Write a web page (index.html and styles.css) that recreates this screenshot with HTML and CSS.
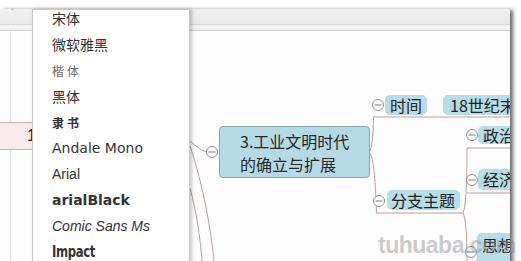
FILE: index.html
```html
<!DOCTYPE html>
<html lang="zh-CN">
<head>
<meta charset="utf-8">
<title>Mind map font menu</title>
<link rel="stylesheet" href="styles.css">
</head>
<body>
<div class="stage">
  <div class="window">
    <div class="titlebar"><span class="caret">ˇ</span></div>
    <div class="canvas">
      <div class="guide"></div>
      <svg class="links" width="510" height="230" viewBox="0 31 510 230" xmlns="http://www.w3.org/2000/svg">
        <g fill="none" stroke="#c39b9b" stroke-width="1">
          <path d="M190 146 C200 175 210 220 214 261"/>
          <path d="M190 188 C196 210 200 235 202 261"/>
          <path d="M190 141 Q200 150 206.5 152"/>
          <path d="M370 151 Q373 146 373.5 117 H510"/>
          <path d="M370 153 Q375 160 376.5 213 H463"/>
          <path d="M463 213 Q467 206 467 148 H510"/>
          <path d="M463 213 Q467 220 467 261"/>
          <path d="M467 193 H510"/>
        </g>
        <g fill="#fff" stroke="#8e8e8e" stroke-width="1">
          <circle cx="212" cy="152" r="5.5"/>
          <circle cx="378" cy="105" r="5.5"/>
          <circle cx="472" cy="135" r="5.5"/>
          <circle cx="472" cy="180" r="5.5"/>
          <circle cx="379" cy="201" r="5.5"/>
          <circle cx="471" cy="252" r="5.5"/>
        </g>
        <g stroke="#7a7a7a" stroke-width="1">
          <path d="M208.5 152 H215.5"/>
          <path d="M374.5 105 H381.5"/>
          <path d="M468.5 135 H475.5"/>
          <path d="M468.5 180 H475.5"/>
          <path d="M375.5 201 H382.5"/>
          <path d="M467.5 252 H474.5"/>
        </g>
      </svg>
      <div class="root">1</div>
      <div class="main-topic">3.工业文明时代<br>的确立与扩展</div>
      <div class="topic t-time">时间</div>
      <div class="topic t-era">18世纪末</div>
      <div class="topic t-pol">政治</div>
      <div class="topic t-eco">经济</div>
      <div class="topic t-branch">分支主题</div>
      <div class="topic t-idea">思想<br>文化</div>
    </div>
  </div>

  <div class="font-menu">
    <ul class="font-list">
      <li class="f-song">宋体</li>
      <li class="f-yahei">微软雅黑</li>
      <li class="f-kai">楷体</li>
      <li class="f-hei">黑体</li>
      <li class="f-li">隶书</li>
      <li class="f-andale">Andale Mono</li>
      <li class="f-arial">Arial</li>
      <li class="f-black">arialBlack</li>
      <li class="f-comic">Comic Sans Ms</li>
      <li class="f-impact">Impact</li>
    </ul>
  </div>

  <div class="watermark">tuhuaba.com</div>
</div>
</body>
</html>
```

FILE: styles.css
```css
* { box-sizing: border-box; }

html, body {
  margin: 0;
  padding: 0;
  background: #ffffff;
}

.stage {
  position: relative;
  width: 521px;
  height: 261px;
  overflow: hidden;
  background: #ffffff;
  font-family: "Noto Sans CJK SC", "Liberation Sans", sans-serif;
}

.window {
  margin-top: 9px;
  width: 510px;
  height: 260px;
  background: #fdfdfd;
  box-shadow: 3px 1px 4px 0 rgba(0, 0, 0, 0.6);
  display: flex;
  flex-direction: column;
}

.titlebar {
  position: relative;
  height: 22px;
  flex: none;
  background: linear-gradient(to bottom, #efefef 0, #e9e9e9 15px, #d8d8d8 15px, #d8d8d8 16px, #f3f3f3 16px, #f1f1f1 21px);
  border-bottom: 1px solid #cccccc;
}

.caret {
  position: absolute;
  left: 10px;
  top: -2px;
  font: 9px/12px "DejaVu Sans", sans-serif;
  color: #9a9a9a;
}

.canvas {
  position: relative;
  flex: 1;
  overflow: hidden;
}

.guide {
  position: absolute;
  left: 10px;
  top: 0;
  width: 1px;
  height: 100%;
  background: #e8e8e8;
}

.links {
  position: absolute;
  left: 0;
  top: 0;
}

.root {
  position: absolute;
  left: -20px;
  top: 91px;
  width: 60px;
  height: 28px;
  padding-left: 47px;
  background: #f8eaeb;
  border-top: 1px solid #d9a8a8;
  border-bottom: 1px solid #d9a8a8;
  font: 16px/26px "Liberation Sans", sans-serif;
  color: #222;
}

.main-topic {
  position: absolute;
  left: 219px;
  top: 95px;
  width: 151px;
  height: 52px;
  padding: 3px 0 0 20px;
  background: #b4dbe5;
  border: 1px solid #8ea5ad;
  border-radius: 4px;
  font: 16px/23px "Noto Sans CJK SC", sans-serif;
  color: #262626;
  white-space: nowrap;
}

.topic {
  position: absolute;
  height: 20px;
  padding: 0 5px;
  background: #b7dde6;
  border-radius: 5px;
  font: 16px/20px "Noto Sans CJK SC", sans-serif;
  color: #222;
  white-space: nowrap;
}

.t-time   { left: 385px; top: 64px; width: 42px; }
.t-era    { left: 443px; top: 64px; width: 90px; padding-left: 7px; }
.t-pol    { left: 478px; top: 95px; width: 50px; height: 18px; line-height: 18px; }
.t-eco    { left: 478px; top: 138px; width: 50px; height: 21px; line-height: 21px; }
.t-branch { left: 387px; top: 159px; width: 73px; padding: 0 4px; }
.t-idea   { left: 477px; top: 202px; width: 50px; height: 48px; padding-top: 1px; line-height: 23px; }

.font-menu {
  position: absolute;
  left: 32px;
  top: 9px;
  width: 158px;
  height: 260px;
  background: #ffffff;
  border: 1px solid #c9c9c9;
  box-shadow: 2px 0 3px rgba(0, 0, 0, 0.22);
  overflow: hidden;
}

.font-list {
  list-style: none;
  margin: -5px 0 0 0;
  padding: 0;
}

.font-list li {
  height: 26px;
  display: flex;
  align-items: center;
  padding-left: 19px;
  font-size: 14px;
  color: #333;
  white-space: nowrap;
}

.f-song  { font-family: "Noto Sans CJK SC", sans-serif; color: #2a2a2a; }
.f-yahei { font-family: "Noto Sans CJK SC", sans-serif; color: #444; }
.f-kai   { font-family: "Noto Sans CJK SC", sans-serif; font-size: 12px !important; letter-spacing: 3px; color: #6a6a6a !important; }
.f-hei   { font-family: "Noto Sans CJK SC", sans-serif; color: #2a2a2a; }
.f-li    { font-family: "Noto Sans CJK SC", sans-serif; font-size: 12px !important; font-weight: 700; letter-spacing: 3px; color: #333; }
.f-andale { font-family: "DejaVu Sans", sans-serif; color: #3a3a3a; }
.f-arial  { font-family: "Liberation Sans", sans-serif; color: #3a3a3a; }
.f-black  { font-family: "DejaVu Sans", sans-serif; font-weight: 700; color: #2a2a2a; }
.f-comic  { font-family: "Liberation Sans", sans-serif; font-style: italic; font-size: 14px; color: #333; }
.f-impact {
  font-family: "DejaVu Sans Condensed", "Liberation Sans", sans-serif;
  font-weight: 700;
  font-size: 15px !important;
  letter-spacing: -0.4px;
  color: #2a2a2a;
  transform: scaleX(0.86);
  transform-origin: 19px 50%;
}

.watermark {
  position: absolute;
  left: 378px;
  top: 234px;
  font: 700 23px/23px "Liberation Sans", sans-serif;
  letter-spacing: -0.5px;
  color: rgba(140, 140, 140, 0.45);
  pointer-events: none;
  white-space: nowrap;
}
```
